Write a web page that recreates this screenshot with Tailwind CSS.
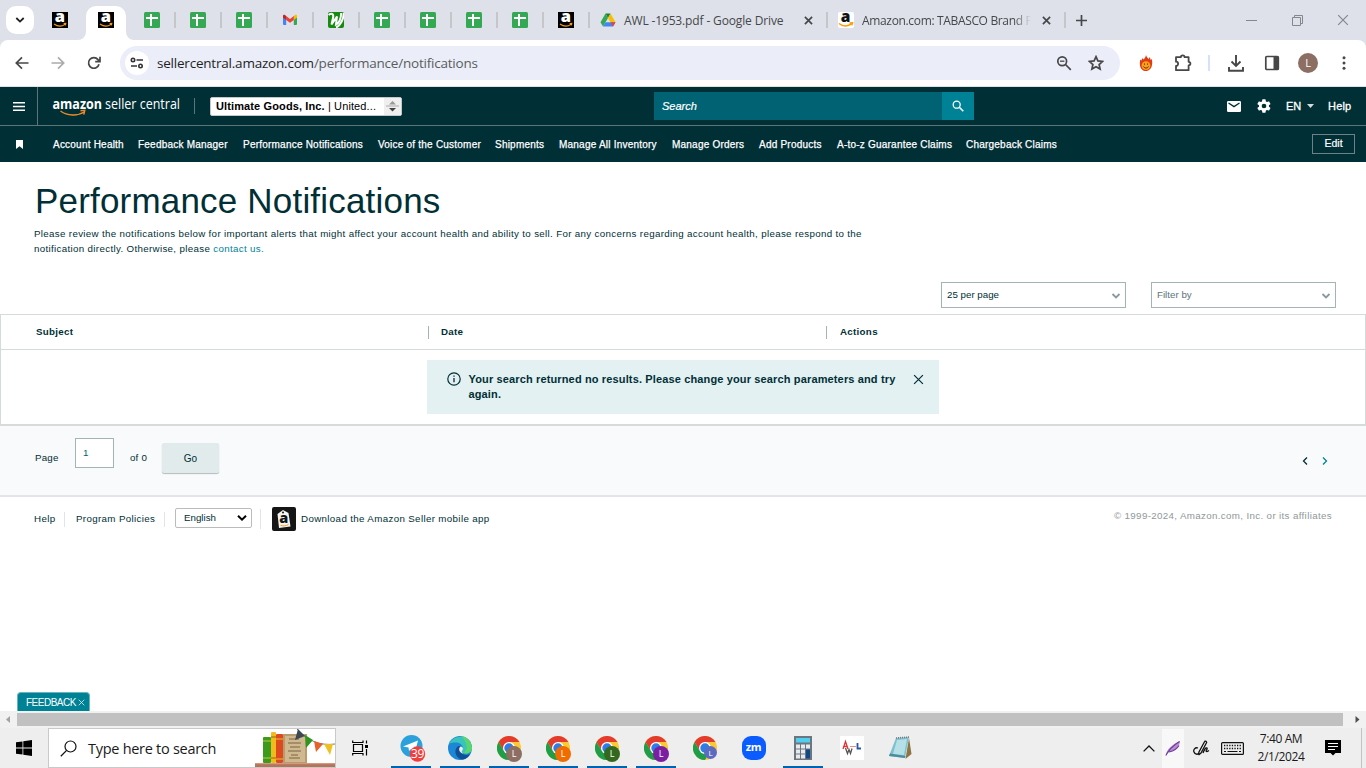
<!DOCTYPE html>
<html lang="en">
<head>
  <meta charset="UTF-8">
  <meta name="viewport" content="width=device-width, initial-scale=1.0">
  <title>Performance Notifications</title>
  <script src="https://cdn.jsdelivr.net/npm/@tailwindcss/browser@4"></script>
</head>
<body class="w-[1366px] h-[768px] overflow-hidden bg-white font-['Liberation_Sans',Arial,sans-serif] text-[#002f36]">

  <!-- Shared icons -->
  <svg class="hidden">
    <symbol id="amazon" viewBox="0 0 16 16">
      <rect width="16" height="16" fill="#000"/>
      <text x="8" y="10.2" font-family="Open Sans, sans-serif" font-weight="800" font-size="16.5" text-anchor="middle" fill="#fff">a</text>
      <path d="M2 12c3.500 2.500 8 2.500 11 .4M11.600 11.600l2.200-.2-.5 2" fill="none" stroke="#f59a1b" stroke-width="1.100"/>
    </symbol>
    <symbol id="sheets" viewBox="0 0 16 16">
      <rect width="16" height="16" rx="1.5" fill="#34a853"/>
      <path d="M2 6h12M7 2v12" stroke="#fff" stroke-width="2"/>
    </symbol>
    <symbol id="chrome" viewBox="0 0 24 24">
      <circle cx="12" cy="12" r="12" fill="#fcc934"/>
      <path d="M12 6h10.4A12 12 0 0 0 1.600 6L6.800 15z" fill="#e33b2e"/>
      <path d="M1.600 6A12 12 0 0 0 12 24l5.200-9H6.800z" fill="#1e9e48"/>
      <circle cx="12" cy="12" r="6" fill="#fff"/>
      <circle cx="12" cy="12" r="4.700" fill="#2b7de9"/>
    </symbol>
    <symbol id="close" viewBox="0 0 10 10">
      <path d="M1 1l8 8M9 1L1 9" fill="none" stroke="currentColor"/>
    </symbol>
    <symbol id="down" viewBox="0 0 10 6">
      <path d="M1.500 1L5 4.500 8.500 1" fill="none" stroke="currentColor" stroke-width="1.800"/>
    </symbol>
  </svg>

  <!-- Tab strip -->
  <div class="h-10 bg-[#dee1e9] flex items-center font-['Open_Sans','Noto_Sans',sans-serif] text-[12px] text-[#45484b]">
    <div class="w-[38px] flex justify-center shrink-0 pl-0.5">
      <div class="w-7 h-7 rounded-[10px] bg-white flex items-center justify-center text-[#1f1f1f] shrink-0">
        <svg class="w-2.5 h-1.5" viewBox="0 0 10 6"><path d="M1.300 1L5 4.600 8.700 1" fill="none" stroke="currentColor" stroke-width="1.800"/></svg>
      </div>
    </div>
    <div class="w-[46px] flex justify-center shrink-0 pr-0.5"><svg class="w-4 h-4"><use href="#amazon"/></svg></div>
    <div class="w-[46px] h-10 relative shrink-0 flex justify-center items-center pr-0.5">
      <svg class="absolute left-[-6px] top-[6px] w-14 h-[34px]" viewBox="0 0 56 34"><path d="M0 34a8 8 0 0 0 8-8V10A10 10 0 0 1 18 0h20a10 10 0 0 1 10 10v16a8 8 0 0 0 8 8z" fill="#fff"/></svg>
      <svg class="w-4 h-4 relative"><use href="#amazon"/></svg>
    </div>
    <div class="w-[46px] flex justify-center shrink-0 border-r-2 border-[#c5c6ca]"><svg class="w-4 h-4"><use href="#sheets"/></svg></div>
    <div class="w-[46px] flex justify-center shrink-0 border-r-2 border-[#c5c6ca]"><svg class="w-4 h-4"><use href="#sheets"/></svg></div>
    <div class="w-[46px] flex justify-center shrink-0 border-r-2 border-[#c5c6ca]"><svg class="w-4 h-4"><use href="#sheets"/></svg></div>
    <div class="w-[46px] flex justify-center shrink-0 border-r-2 border-[#c5c6ca]">
      <svg class="w-4 h-4" viewBox="0 0 16 16">
        <path d="M1 4.500h3.200V13H2a1 1 0 0 1-1-1z" fill="#4285f4"/>
        <path d="M11.800 4.500H15V12a1 1 0 0 1-1 1h-2.200z" fill="#34a853"/>
        <path d="M11.800 4l1.300-1c.8-.6 1.900 0 1.900 1v1.500l-3.200 2.400z" fill="#fbbc04"/>
        <path d="M4.200 4L8 6.900 11.800 4v3.900L8 10.800 4.200 7.900z" fill="#ea4335"/>
        <path d="M1 4c0-1 1.100-1.600 1.900-1l1.300 1v3.900L1 5.500z" fill="#c5221f"/>
      </svg>
    </div>
    <div class="w-[46px] flex justify-center shrink-0 border-r-2 border-[#c5c6ca]">
      <svg class="w-4 h-4" viewBox="0 0 16 16">
        <rect width="16" height="16" rx="2" fill="#178a10"/>
        <path d="M.5 3C4 .5 6 2 5 6L3.500 12.500 9 4.500 8 12.500C11 11 13 6 13.200 1M15.800 1C15.500 8 12 14 8 15.500" fill="none" stroke="#fff" stroke-width="2"/>
      </svg>
    </div>
    <div class="w-[46px] flex justify-center shrink-0 border-r-2 border-[#c5c6ca]"><svg class="w-4 h-4"><use href="#sheets"/></svg></div>
    <div class="w-[46px] flex justify-center shrink-0 border-r-2 border-[#c5c6ca]"><svg class="w-4 h-4"><use href="#sheets"/></svg></div>
    <div class="w-[46px] flex justify-center shrink-0 border-r-2 border-[#c5c6ca]"><svg class="w-4 h-4"><use href="#sheets"/></svg></div>
    <div class="w-[46px] flex justify-center shrink-0 border-r-2 border-[#c5c6ca]"><svg class="w-4 h-4"><use href="#sheets"/></svg></div>
    <div class="w-[46px] flex justify-center shrink-0 border-r-2 border-[#c5c6ca]"><svg class="w-4 h-4"><use href="#amazon"/></svg></div>
    <div class="w-[238px] h-4 flex items-center shrink-0 border-r-2 border-[#c5c6ca] pl-2.5 pr-[13px]">
      <svg class="w-4 h-4 shrink-0" viewBox="0 0 16 16">
        <path d="M5.500 1.500h5L8 6z" fill="#188038"/>
        <path d="M5.500 1.500L.5 10.200 3 14.500 8 6z" fill="#34a853"/>
        <path d="M10.500 1.500L15.500 10.200h-5L8 6z" fill="#fbbc04"/>
        <path d="M5.500 10.200h10L13 14.500H3z" fill="#4285f4"/>
        <path d="M10.500 10.200h5L13 14.500z" fill="#ea4335"/>
      </svg>
      <span class="ml-2 mt-0.5 flex-1 whitespace-nowrap tracking-[-0.14px]">AWL -1953.pdf - Google Drive</span>
      <svg class="w-[9px] h-[9px]" viewBox="0 0 10 10"><path d="M1 1l8 8M9 1L1 9" stroke="#45484b" stroke-width="1.900"/></svg>
    </div>
    <div class="w-[238px] h-4 flex items-center shrink-0 border-r-2 border-[#c5c6ca] pl-2.5 pr-[13px]">
      <svg class="w-4 h-4 shrink-0" viewBox="0 0 16 16">
        <rect width="16" height="16" rx="2" fill="#fff"/>
        <text x="7.500" y="9.800" font-family="Open Sans, sans-serif" font-weight="800" font-size="15.500" text-anchor="middle" fill="#111">a</text>
        <path d="M1 11.500c3.800 3 8.500 2.800 12 .7M11.500 11l3-.2-.7 2.600" fill="none" stroke="#f90" stroke-width="1.500"/>
      </svg>
      <span class="ml-2 mt-0.5 w-[169px] whitespace-nowrap tracking-[-0.34px] mask-r-from-90% mask-r-to-100%">Amazon.com: TABASCO Brand P</span>
      <svg class="w-[9px] h-[9px] ml-auto shrink-0" viewBox="0 0 10 10"><path d="M1 1l8 8M9 1L1 9" stroke="#45484b" stroke-width="1.900"/></svg>
    </div>
    <svg class="w-[11px] h-[11px] ml-[10px]" viewBox="0 0 11 11"><path d="M5.500 0v11M0 5.500h11" stroke="#45484b" stroke-width="1.700"/></svg>
    <div class="ml-auto flex items-center pr-[17px] text-[#85878b]">
      <svg class="w-[11px] h-[11px]" viewBox="0 0 11 11"><path d="M0 5.500h11" stroke="currentColor"/></svg>
      <svg class="w-[11px] h-[11px] ml-[35px]" viewBox="0 0 11 11"><path d="M.5 2.500h8v8h-8zM2.500 2.500v-2h8v8h-2" fill="none" stroke="currentColor"/></svg>
      <svg class="w-3 h-3 ml-[34px]"><use href="#close"/></svg>
    </div>
  </div>

  <!-- Address bar -->
  <div class="h-[47px] bg-[#dee1e9]">
    <div class="h-[47px] bg-white rounded-t-[8px] border-b border-[#dfe3e4] flex items-center text-[#474747]">
      <svg class="w-3.5 h-3.5 ml-[15px]" viewBox="0 0 14 14"><path d="M13.500 7H1.500M7 1.300L1.300 7 7 12.700" fill="none" stroke="currentColor" stroke-width="1.700"/></svg>
      <svg class="w-3.5 h-3.5 ml-[22px] text-[#ababab]" viewBox="0 0 14 14"><path d="M.5 7h12M7 1.300L12.700 7 7 12.700" fill="none" stroke="currentColor" stroke-width="1.700"/></svg>
      <svg class="w-3.5 h-3.5 ml-[22px]" viewBox="0 0 14 14"><path d="M12 8.200A5.300 5.300 0 1 1 11 3.600L12.600 5.400M13 .8v4.900H8.200" fill="none" stroke="currentColor" stroke-width="1.700"/></svg>
      <div class="ml-[19px] w-[1000px] h-[34px] rounded-full bg-[#ebeef8] flex items-center">
        <div class="w-6 h-6 ml-[5px] rounded-full bg-white flex items-center justify-center">
          <svg class="w-3.5 h-3" viewBox="0 0 14 12"><g fill="none" stroke="#333" stroke-width="1.600"><circle cx="3" cy="3" r="1.700"/><path d="M6.500 3H13M1 9h6"/><circle cx="10.500" cy="9" r="1.700"/></g></svg>
        </div>
        <div class="ml-2 font-['Open_Sans','Noto_Sans',sans-serif] text-[13.500px] text-[#5a5c60] tracking-[-0.21px]"><span class="text-[#1f1f1f]">sellercentral.amazon.com</span>/performance/notifications</div>
        <svg class="w-4 h-4 ml-auto" viewBox="0 0 16 16"><g fill="none" stroke="#474747" stroke-width="1.700"><circle cx="6.200" cy="6.200" r="4.400"/><path d="M9.500 9.500l5.300 5.300"/><path d="M4 6.200h4.400" stroke-width="1.300"/></g></svg>
        <svg class="w-4 h-4 ml-4 mr-4" viewBox="0 0 16 16"><path d="M8 1.700l1.900 4.200 4.700.5-3.500 3.100 1 4.600L8 11.700l-4.100 2.400 1-4.600L1.400 6.400l4.700-.5z" fill="none" stroke="#474747" stroke-width="1.700"/></svg>
      </div>
      <svg class="w-4 h-4 ml-[18px]" viewBox="0 0 16 16">
        <path d="M8 0c.5 2 1.500 2.500 2.500 4 .8-.5 1-1.300 1-2 1 1 1 2 .9 3 .8-.2 1.200-.5 1.500-1C14 6 14.600 7.500 14 10c-.6 3.500-3 6-6 6s-5.500-2-6-5.500C1.600 8 2 6.500 2.200 4.500c.5.500.8.800 1.300 1C3.700 4.500 4 3.800 4.500 3c.2.700.5 1.100 1 1.500C7 3.300 7.500 2 8 0z" fill="#e03a16"/>
        <circle cx="8" cy="10.600" r="4.400" fill="#f7a114"/><path d="M5.500 11.500c1 2 4 2 5 0M6.500 8.500v1.200M9.500 8.500v1.200" fill="none" stroke="#64240e" stroke-width="1"/>
      </svg>
      <svg class="w-[18px] h-[18px] ml-5" viewBox="0 0 18 18"><path d="M2 3.200h4.800a1.900 1.900 0 0 1 3.800 0h4v4.600a1.800 1.800 0 0 1 0 3.600v4.800H2v-4.300a2 2 0 0 0 0-4.200z" fill="none" stroke="#474747" stroke-width="1.800" stroke-linejoin="round"/></svg>
      <div class="w-0.5 h-4 ml-4 bg-[#d3e3fd]"></div>
      <svg class="w-4 h-[17px] ml-[18px]" viewBox="0 0 16 17"><path d="M8 0v10.500M3.500 6.500L8 11l4.500-4.500M1 12v3.800h14V12" fill="none" stroke="#474747" stroke-width="1.900"/></svg>
      <svg class="w-4 h-4 ml-5" viewBox="0 0 16 16"><rect x="1.800" y="1.500" width="12.500" height="13" rx="1" fill="none" stroke="#474747" stroke-width="1.700"/><path d="M9.500 1.500h5v13h-5z" fill="#474747"/></svg>
      <div class="w-5 h-5 ml-[18px] rounded-full bg-[#8d6e63] text-white text-[11px] flex items-center justify-center font-['Open_Sans',sans-serif]">L</div>
      <svg class="w-1 h-3.5 ml-6" viewBox="0 0 4 14" fill="#474747"><circle cx="2" cy="1.700" r="1.500"/><circle cx="2" cy="7" r="1.500"/><circle cx="2" cy="12.300" r="1.500"/></svg>
    </div>
  </div>

  <!-- Seller Central header -->
  <header class="bg-[#002f36] text-white text-[11px]">
    <div class="h-[39px] flex items-center border-b border-[#5d7478]">
      <div class="w-[38px] h-full flex items-center justify-center border-r border-[#5d7478]">
        <svg class="w-3 h-[9px]" viewBox="0 0 12 9"><path d="M0 .7h12M0 4.500h12M0 8.300h12" stroke="#fff" stroke-width="1.400"/></svg>
      </div>
      <svg class="w-[132px] h-6 ml-3.5" viewBox="0 0 132 24" font-family="Open Sans, Noto Sans, sans-serif" fill="#fff">
        <text x="0.500" y="15.300" font-size="14.500" font-weight="700" textLength="49.500" lengthAdjust="spacingAndGlyphs">amazon</text>
        <text x="53" y="15.300" font-size="14.500" textLength="75" lengthAdjust="spacingAndGlyphs">seller central</text>
        <path d="M8.500 17c7 5.200 17 5.200 23.500 1M28.500 16.800l4.300-.4-1 4.200" fill="none" stroke="#f08c28" stroke-width="1.400"/>
      </svg>
      <div class="w-px h-4 ml-2.5 bg-[#5d7478]"></div>
      <div class="ml-[15px] w-[192px] h-[19px] bg-white border border-[#c4c8c8] rounded-[2px] flex items-center text-black">
        <span class="pl-[5px] flex-1 whitespace-nowrap tracking-[0.12px]"><b>Ultimate Goods, Inc.</b> | United...</span>
        <div class="w-[17px] h-full bg-[#efefef] flex items-center justify-center">
          <svg class="w-[13px] h-3" viewBox="0 0 13 12"><path d="M3 4.500L6.500 1 10 4.500z" fill="#999"/><path d="M0 6h13" stroke="#aaa"/><path d="M3 8l3.500 3.500L10 8z" fill="#444"/></svg>
        </div>
      </div>
      <div class="ml-[252px] w-[320px] h-7 flex">
        <div class="flex-1 bg-[#006272] flex items-center pl-2 italic [-webkit-text-stroke:0.2px]">Search</div>
        <div class="w-8 bg-[#008296] flex items-center justify-center">
          <svg class="w-3 h-3" viewBox="0 0 12 12"><circle cx="4.700" cy="4.700" r="3.500" fill="none" stroke="#fff" stroke-width="1.300"/><path d="M7.300 7.300l4 4" stroke="#fff" stroke-width="1.600"/></svg>
        </div>
      </div>
      <svg class="w-3.5 h-[11px] ml-[253px]" viewBox="0 0 14 11"><rect width="14" height="11" rx="1.300" fill="#fff"/><path d="M1.500 2L7 5.600 12.500 2" fill="none" stroke="#002f36" stroke-width="1.300"/></svg>
      <svg class="w-4 h-4 ml-[15px]" viewBox="0 0 24 24"><path fill="#fff" d="M19.400 13a7.500 7.500 0 0 0 0-2l2.100-1.600a.5.5 0 0 0 .1-.6l-2-3.500a.5.5 0 0 0-.6-.2l-2.500 1a7.300 7.300 0 0 0-1.700-1l-.4-2.600a.5.5 0 0 0-.5-.5h-4a.5.5 0 0 0-.5.5L9 5.100a7.700 7.700 0 0 0-1.700 1l-2.500-1a.5.500 0 0 0-.6.2l-2 3.500a.5.5 0 0 0 .1.600L4.500 11a7.900 7.900 0 0 0 0 2l-2.200 1.600a.5.5 0 0 0-.1.600l2 3.500c.1.200.4.300.6.200l2.500-1a7.300 7.300 0 0 0 1.700 1l.4 2.600c0 .3.200.5.500.5h4c.3 0 .5-.2.500-.5l.4-2.600a7.700 7.700 0 0 0 1.700-1l2.500 1c.2.100.5 0 .6-.2l2-3.500a.5.500 0 0 0-.1-.6zM12 15.500a3.500 3.500 0 1 1 0-7 3.500 3.500 0 0 1 0 7z"/></svg>
      <span class="ml-3.5 w-[21px] [-webkit-text-stroke:0.3px]">EN</span>
      <svg class="w-[7px] h-1" viewBox="0 0 7 4"><path d="M0 0h7L3.500 4z" fill="#d5dcdc"/></svg>
      <span class="ml-[14px] tracking-[0.2px] [-webkit-text-stroke:0.3px]">Help</span>
    </div>
    <nav class="h-9 flex items-center pr-[11px]">
      <svg class="w-[7px] h-[9px] ml-4 mr-[30px]" viewBox="0 0 7 9"><path d="M0 0h7v9L3.500 6.300 0 9z" fill="#fff"/></svg>
      <div class="flex flex-1 pt-px whitespace-nowrap text-[10px] tracking-[0.22px] [-webkit-text-stroke:0.25px]">
        <span class="w-[85px]">Account Health</span>
        <span class="w-[105px]">Feedback Manager</span>
        <span class="w-[135px]">Performance Notifications</span>
        <span class="w-[117px]">Voice of the Customer</span>
        <span class="w-16">Shipments</span>
        <span class="w-[113px]">Manage All Inventory</span>
        <span class="w-[87px]">Manage Orders</span>
        <span class="w-[78px]">Add Products</span>
        <span class="w-[129px]">A-to-z Guarantee Claims</span>
        <span>Chargeback Claims</span>
      </div>
      <div class="w-[43px] h-5 border border-[#6d8286] flex items-center justify-center text-[10.500px] [-webkit-text-stroke:0.2px]">Edit</div>
    </nav>
  </header>

  <!-- Page -->
  <main class="h-[549px] relative text-[9.750px]">
    <div class="h-[152px] pl-[34px] pt-[18px]">
      <h1 class="text-[35px] leading-[42px] tracking-[0.19px] ml-px">Performance Notifications</h1>
      <p class="mt-[4px] leading-[15px] tracking-[0.33px] w-[860px]">Please review the notifications below for important alerts that might affect your account health and ability to sell. For any concerns regarding account health, please respond to the<br>notification directly. Otherwise, please <a class="text-[#008296]">contact us.</a></p>
      <div class="flex justify-end gap-[25px] pr-[30px] mt-[26px]">
        <div class="w-[185px] h-[26px] border border-[#a2b4b5] flex items-center justify-between pl-[5px] pr-1"><span>25 per page</span><svg class="w-2.5 h-1.5 mt-0.5 text-[#8a999b]"><use href="#down"/></svg></div>
        <div class="w-[185px] h-[26px] border border-[#a2b4b5] flex items-center justify-between pl-[5px] pr-1 text-[#5c7479]"><span>Filter by</span><svg class="w-2.5 h-1.5 mt-0.5 text-[#8a999b]"><use href="#down"/></svg></div>
      </div>
    </div>

    <div class="h-[112px] border border-b-2 border-[#d5dbdb]">
      <div class="h-[35px] border-b border-[#d5dbdb] flex items-center font-bold tracking-[0.3px]">
        <div class="pl-[35px] w-[427px]">Subject</div>
        <div class="w-[398px] h-[13px] flex items-center border-l border-[#a2b4b5] pl-3">Date</div>
        <div class="h-[13px] flex items-center border-l border-[#a2b4b5] pl-[13px]">Actions</div>
      </div>
      <div class="mt-[10px] ml-[426px] w-[512px] h-[54px] bg-[#e3f1f2] flex pl-5 pt-3">
        <svg class="w-3.5 h-3.5 shrink-0" viewBox="0 0 14 14"><circle cx="7" cy="7" r="6.200" fill="none" stroke="#002f36" stroke-width="1.200"/><path d="M7 6v4.300M7 3.500v1.300" stroke="#002f36" stroke-width="1.300"/></svg>
        <p class="ml-[7.500px] w-[436px] text-[11px] leading-[15px] font-bold tracking-[0.14px]">Your search returned no results. Please change your search parameters and try again.</p>
        <svg class="w-[11px] h-[11px] ml-[8.500px] mt-[1.500px] shrink-0" viewBox="0 0 10 10"><path d="M1 1l8 8M9 1L1 9" stroke="#002f36" stroke-width="1.100"/></svg>
      </div>
    </div>

    <div class="h-[71px] bg-[#f9fafb] border-b-2 border-[#e1e4e8] flex items-start pl-[35px] tracking-[0.2px]">
      <span class="w-10 mt-[25px]">Page</span>
      <div class="w-[39px] h-[30px] mt-3 bg-white border border-[#a2b4b5] pl-[7px] pt-[7px] text-[#00616f]">1</div>
      <span class="w-8 ml-4 mt-[25px]">of 0</span>
      <div class="w-[57px] h-[30px] mt-[17px] bg-[#e2ebeb] rounded-[2px] shadow-[0_1px_1px_#b4babb] flex items-center justify-center text-[10px]">Go</div>
      <svg class="w-[6px] h-2 ml-auto mt-[31px]" viewBox="0 0 6 8"><path d="M5 .5L1.500 4 5 7.500" fill="none" stroke="#002f36" stroke-width="1.300"/></svg>
      <svg class="w-[6px] h-2 ml-[14px] mr-[38px] mt-[31px]" viewBox="0 0 6 8"><path d="M1 .5L4.500 4 1 7.500" fill="none" stroke="#008296" stroke-width="1.300"/></svg>
    </div>

    <footer class="h-11 flex items-center pl-[34px] tracking-[0.35px]">
      <span class="w-[30px]">Help</span>
      <div class="w-px h-[15px] bg-[#e1e4e8]"></div>
      <span class="w-[88px] ml-[11px]">Program Policies</span>
      <div class="w-px h-[15px] bg-[#e1e4e8]"></div>
      <div class="ml-[10px] mb-0.5 w-[77px] h-5 border border-[#bbb] rounded-[2px] flex items-center justify-between pl-[8px] pr-1 tracking-[0px]">English <svg class="w-2.5 h-1.5" viewBox="0 0 10 6"><path d="M1 .8L5 4.600 9 .8" fill="none" stroke="#000" stroke-width="2"/></svg></div>
      <div class="w-px h-5 ml-2 bg-[#e1e4e8]"></div>
      <svg class="w-6 h-6 ml-[11px] mr-[5px]" viewBox="0 0 24 24">
        <rect width="24" height="24" rx="2" fill="#151515"/>
        <path d="M5.500 7L11 3l5.500 3 2 13.500L7 21z" fill="#f4f4f0"/><circle cx="11" cy="5.500" r="1" fill="#151515"/>
        <text x="12" y="16.300" font-family="Open Sans, sans-serif" font-weight="800" font-size="14.500" text-anchor="middle" fill="#151515">a</text>
        <path d="M8.500 18.300c2.500 1 5.500.8 8-.9" fill="none" stroke="#f59a1b" stroke-width="1"/>
      </svg>
      <span>Download the Amazon Seller mobile app</span>
      <span class="ml-auto mr-[34px] mb-[5px] text-[#8f9899]">© 1999-2024, Amazon.com, Inc. or its affiliates</span>
    </footer>

    <div class="absolute left-[17px] bottom-0 w-[73px] h-[19px] bg-[#008296] border-t border-x border-[#6db3be] rounded-t-[4px] text-white text-[10px] flex items-center justify-between pl-2 pr-1 tracking-[-0.5px]">FEEDBACK <svg class="w-[7px] h-[7px]"><use href="#close"/></svg></div>
  </main>

  <!-- Horizontal scrollbar -->
  <div class="h-[17px] bg-[#f1f1f1] flex items-center">
    <svg class="w-[17px] h-[17px]" viewBox="0 0 17 17"><path d="M10 5v7L6 8.500z" fill="#a3a3a3"/></svg>
    <div class="w-[1326px] h-[13px] bg-[#c1c1c1]"></div>
    <svg class="w-[17px] h-[17px] ml-[5px]" viewBox="0 0 17 17"><path d="M7.500 5v7l4-3.500z" fill="#505050"/></svg>
  </div>

  <!-- Taskbar -->
  <div class="h-10 bg-[#eee] flex items-center font-['Open_Sans','Noto_Sans',sans-serif] text-[#1a1a1a]">
    <svg class="w-4 h-4 ml-4 mr-4" viewBox="0 0 16 16"><path d="M0 2.300L6.500 1.400v6.200H0zM7.300 1.300L16 0v7.600H7.300zM0 8.400h6.500v6.200L0 13.700zM7.300 8.400H16V16l-8.700-1.300z" fill="#000"/></svg>
    <div class="w-[288px] h-10 bg-white border border-[#c9c9c9] flex items-center">
      <svg class="w-[17px] h-[17px] ml-[11px]" viewBox="0 0 17 17"><circle cx="10.500" cy="6.500" r="5.500" fill="none" stroke="#111" stroke-width="1.200"/><path d="M6.600 10.400L.8 16.200" stroke="#111" stroke-width="1.300"/></svg>
      <span class="ml-[11px] mt-0.5 text-[14.500px] tracking-[-0.28px] whitespace-nowrap">Type here to search</span>
      <!-- Bookshelf with bunting -->
      <svg class="w-20 h-[38px] ml-auto" viewBox="0 0 80 38">
        <rect y="34" width="80" height="4" fill="#b5735a"/><rect y="34" width="80" height="1.200" fill="#d19a80"/>
        <rect x="8" y="8" width="8" height="26" rx="1" fill="#3c9a1f"/><path d="M8 12h8M8 29h8" stroke="#b4d13a"/>
        <rect x="16" y="3" width="5" height="31" rx="1" fill="#f0bb1b"/><path d="M16 8h5M16 29h5" stroke="#8f6a10"/>
        <rect x="21" y="5" width="7" height="29" rx="1" fill="#dd4a1f"/><path d="M21 10h7M21 30h7" stroke="#f3bb38"/>
        <rect x="28" y="5" width="24" height="29" fill="#b89c70"/><rect x="30" y="7" width="20" height="26" fill="#d0b88f"/>
        <path d="M34 10h10M33 14h13M35 18h10M33 22h13M36 26h7M34 29h11" stroke="#6f5a3c" stroke-width=".9"/>
        <path d="M42 0C52 12 66 17 80 15" fill="none" stroke="#555" stroke-width=".8"/>
        <path d="M43 0l7 7-10 4z" fill="#3c4852"/><path d="M50 6l8 5-7 8z" fill="#2f9420"/><path d="M59 12l9 3-7 8z" fill="#e8602c"/><path d="M69 15h9l-3 11z" fill="#efc021"/>
      </svg>
    </div>
    <svg class="w-4 h-4 ml-4 mr-[19px]" viewBox="0 0 16 16" fill="none" stroke="#000" stroke-width="1.200"><path d="M1.500 4.500h9v7h-9zM.7 3V.6M11 3V.6M.7 15.400v-2.400M11 15.400v-2.400M.7 2.500h10.300M.7 13.500h10.300M14.500.5v3M14.500 9v6.500"/><path d="M13 5h3v3h-3z" fill="#000" stroke="none"/></svg>

    <div class="w-[49px] h-10 relative flex items-center justify-center shrink-0">
      <svg class="w-7 h-7" viewBox="0 0 28 28"><circle cx="13.500" cy="12" r="11" fill="#2ba0da"/><path d="M5 12.500L20 6.500 17 18l-4-3-2 2-.5-3.500z" fill="#fff"/><circle cx="19.500" cy="20" r="7.700" fill="#f03e3e"/><text x="19.500" y="24.300" font-size="12" text-anchor="middle" fill="#fff" letter-spacing="-.4">39</text></svg>
      <div class="absolute bottom-0 left-[4px] w-10 h-0.5 bg-[#0063b1]"></div>
    </div>
    <div class="w-[49px] h-10 relative flex items-center justify-center shrink-0 pr-0.5">
      <svg class="w-6 h-6" viewBox="0 0 24 24">
        <circle cx="12" cy="12" r="12" fill="#1b87d6"/>
        <path d="M1 8A12 12 0 0 1 24 11.500c0 4-3 6-6.500 6-2.500 0-4-1-4-2 0-.8 1.500-1.500 1.500-3.500C15 8.500 11 6.500 7.500 6.500 4.500 6.500 2 7 1 8z" fill="#39c3bd"/>
        <path d="M13 0A12 12 0 0 1 24 11.500c0 4-3 6-6.500 6-1 0-2-.2-2.700-.5 6-2 5-11-1.800-17z" fill="#5bd66c"/>
        <path d="M9 11c-4 5 0 12.500 6 12.500 3.500-.5 6-3 7.200-5.500-4 2-8.700 1-9.200-3-.2-2 1-3 1-4-1-1.500-3.500-1.500-5 0z" fill="#104f96"/>
        <path d="M12.500 10.500c-2.500 2-1.500 6.500 3 7-2-1.200-2.200-2-.9-3.500 1-1.500 0-3.500-2.100-3.500z" fill="#eee"/>
      </svg>
      <div class="absolute bottom-0 left-[4px] w-10 h-0.5 bg-[#0063b1]"></div>
    </div>
    <div class="w-[49px] h-10 relative flex items-center justify-center shrink-0 pr-0.5">
      <svg class="w-6 h-6"><use href="#chrome"/></svg>
      <div class="absolute left-[21px] top-[18px] w-4 h-4 rounded-full bg-[#8d6e63] text-white text-[9px] leading-4 text-center">L</div>
      <div class="absolute bottom-0 left-[4px] w-10 h-0.5 bg-[#0063b1]"></div>
    </div>
    <div class="w-[49px] h-10 relative flex items-center justify-center shrink-0 pr-0.5">
      <svg class="w-6 h-6"><use href="#chrome"/></svg>
      <div class="absolute left-[21px] top-[18px] w-4 h-4 rounded-full bg-[#ef6c00] text-white text-[9px] leading-4 text-center">L</div>
      <div class="absolute bottom-0 left-[4px] w-10 h-0.5 bg-[#0063b1]"></div>
    </div>
    <div class="w-[49px] h-10 relative flex items-center justify-center shrink-0 pr-0.5">
      <svg class="w-6 h-6"><use href="#chrome"/></svg>
      <div class="absolute left-[21px] top-[18px] w-4 h-4 rounded-full bg-[#33691e] text-white text-[9px] leading-4 text-center">L</div>
      <div class="absolute bottom-0 left-[4px] w-10 h-0.5 bg-[#0063b1]"></div>
    </div>
    <div class="w-[49px] h-10 relative flex items-center justify-center shrink-0 pr-0.5">
      <svg class="w-6 h-6"><use href="#chrome"/></svg>
      <div class="absolute left-[21px] top-[18px] w-4 h-4 rounded-full bg-[#7b1fa2] text-white text-[9px] leading-4 text-center">L</div>
      <div class="absolute bottom-0 left-[4px] w-10 h-0.5 bg-[#0063b1]"></div>
    </div>
    <div class="w-[49px] h-10 relative flex items-center justify-center shrink-0 pr-0.5">
      <svg class="w-6 h-6"><use href="#chrome"/></svg>
      <div class="absolute left-[23px] top-[18px] w-[13px] h-[13px] rounded-full bg-[#5c6bc0] text-white text-[8px] leading-[13px] text-center">L</div>
    </div>
    <div class="w-[49px] flex justify-center shrink-0 pr-0.5">
      <div class="w-6 h-6 rounded-[9px] bg-[#0b5cff] text-white font-bold text-[11px] leading-[21px] text-center tracking-[-0.3px]">zm</div>
    </div>
    <div class="w-[49px] h-10 relative flex items-center justify-center shrink-0 pr-0.5">
      <svg class="w-[18px] h-6" viewBox="0 0 18 24"><rect width="18" height="24" fill="#6c7580"/><rect x="2" y="2" width="14" height="4.500" fill="#4fd0ee"/><path d="M2 8.500h4v4H2zM7 8.500h4v4H7zM12 8.500h4v4h-4zM2 13.500h4v4H2zM7 13.500h4v4H7zM2 18.500h4v4H2zM7 18.500h4v4H7z" fill="#e8ebee"/><path d="M12 13.500h4v9h-4z" fill="#104a86"/></svg>
      <div class="absolute bottom-0 left-[4px] w-10 h-0.5 bg-[#0063b1]"></div>
    </div>
    <div class="w-[49px] flex justify-center shrink-0 pr-0.5">
      <svg class="w-6 h-6" viewBox="0 0 24 24"><rect width="24" height="24" fill="#fff"/><path d="M3 13L5.500 5.500 8 13M4 10.500h3" fill="none" stroke="#d33" stroke-width="1.300"/><path d="M5.500 12l2 5.500 1.500-4 1.500 4 1.500-5" fill="none" stroke="#555" stroke-width="1.300"/><path d="M10 10.500h6" stroke="#e88" stroke-width="1"/><path d="M17.500 7v5.500H21" fill="none" stroke="#2358a5" stroke-width="1.800"/></svg>
    </div>
    <div class="w-[49px] flex justify-center shrink-0 pr-[3px]">
      <svg class="w-6 h-6" viewBox="0 0 24 24"><path d="M21 2l2.500 16-6 5z" fill="#8d7442"/><path d="M8 2l13-1-4 21L1 20z" fill="#7fbfce"/><path d="M9 4l10-1-3 16-11-1z" fill="#b4e0e6"/><path d="M1 20l16 2 .5-2L2 17.500z" fill="#4b8c9d"/><path d="M8 2l13-1" stroke="#777" stroke-width="1.500" stroke-dasharray="1 1"/></svg>
    </div>

    <div class="ml-auto flex items-center h-10">
      <svg class="w-3 h-[7px]" viewBox="0 0 12 7"><path d="M.6 6.400L6 1l5.400 5.400" fill="none" stroke="#111" stroke-width="1.300"/></svg>
      <div class="w-[22px] h-[39px] ml-[7px] bg-[#f8f8f8] flex items-center justify-center">
        <svg class="w-4 h-4" viewBox="0 0 16 16"><path d="M1 15C1.500 9 8 4 15 1c0 5-4 9-11 11z" fill="#b58fd0"/><path d="M.8 15.500C4 9 9 5 14.500 1.500M4 12c4-1 8-3 10-6.500" fill="none" stroke="#713b9b" stroke-width="1.100"/></svg>
      </div>
      <svg class="w-[17px] h-4 ml-[9px]" viewBox="0 0 17 16" fill="none" stroke="#111" stroke-width="1.300"><path d="M5 8C2 7 0 10 1 12c1 3 5 3 5 0L11.500 1.800c.6-1.300 2.700-.3 2 1L8 13l-2.500 2M10 13c1-3 3-6 4-5s-2 3-.5 3.500c1 .3 1.500-.5 2.500-1"/></svg>
      <svg class="w-[23px] h-[13px] ml-[11px]" viewBox="0 0 23 13"><rect x=".6" y=".6" width="21.800" height="11.800" rx="1" fill="none" stroke="#111" stroke-width="1.200"/><path d="M3 3.500h17M3 6.500h17" stroke="#111" stroke-width="1.300" stroke-dasharray="1.300 1.300"/><path d="M3 9.500h2M6.500 9.500h10M18 9.500h2" stroke="#111" stroke-width="1.200"/></svg>
      <div class="w-[60px] ml-[7px] text-center text-[12px] leading-[18px] tracking-[-0.4px] whitespace-nowrap">7:40 AM<br>2/1/2024</div>
      <svg class="w-4 h-4 ml-[14px]" viewBox="0 0 16 16"><path d="M0 0h16v13h-5.500L8 15.500 5.500 13H0z" fill="#000"/><path d="M3 3.500h10M3 6.500h10M3 9.500h7" stroke="#fff"/></svg>
      <div class="w-px h-10 ml-5 mr-1 bg-[#c4c4c4]"></div>
    </div>
  </div>
</body>
</html>
